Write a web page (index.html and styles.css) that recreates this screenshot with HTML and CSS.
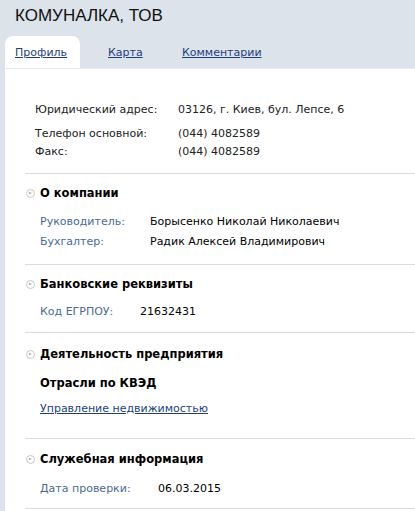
FILE: index.html
```html
<!DOCTYPE html>
<html lang="ru">
<head>
<meta charset="utf-8">
<link rel="stylesheet" href="styles.css">
</head>
<body>
<div class="page">
  <h1 class="title">КОМУНАЛКА, ТОВ</h1>
  <nav class="tabs">
    <div class="tab active"><a href="#">Профиль</a></div>
    <div class="tab"><a href="#">Карта</a></div>
    <div class="tab"><a href="#">Комментарии</a></div>
  </nav>
  <main class="panel">
    <div class="contacts">
      <div class="crow first"><span class="clabel">Юридический адрес:</span><span>03126, г. Киев, бул. Лепсе, 6</span></div>
      <div class="crow"><span class="clabel">Телефон основной:</span><span>(044) 4082589</span></div>
      <div class="crow"><span class="clabel">Факс:</span><span>(044) 4082589</span></div>
    </div>

    <section class="sec s-company">
      <h2 class="shead"><span class="icon"></span>О компании</h2>
      <div class="rows w110">
        <span class="lbl">Руководитель:</span><span class="val">Борысенко Николай Николаевич</span>
        <span class="lbl">Бухгалтер:</span><span class="val">Радик Алексей Владимирович</span>
      </div>
    </section>

    <section class="sec s-bank">
      <h2 class="shead"><span class="icon"></span>Банковские реквизиты</h2>
      <div class="rows w100">
        <span class="lbl">Код ЕГРПОУ:</span><span class="val">21632431</span>
      </div>
    </section>

    <section class="sec s-act">
      <h2 class="shead"><span class="icon"></span>Деятельность предприятия</h2>
      <h3 class="subhead">Отрасли по КВЭД</h3>
      <a class="link" href="#">Управление недвижимостью</a>
    </section>

    <section class="sec s-service">
      <h2 class="shead"><span class="icon"></span>Служебная информация</h2>
      <div class="rows w118">
        <span class="lbl">Дата проверки:</span><span class="val">06.03.2015</span>
      </div>
    </section>
  </main>
</div>
</body>
</html>
```

FILE: styles.css
```css
html, body {
  margin: 0;
  padding: 0;
  background: #dce3ea;
  font-family: "DejaVu Sans", Verdana, sans-serif;
  font-size: 11px;
  color: #000;
}

.page {
  width: 415px;
  height: 511px;
  overflow: hidden;
}

.title {
  margin: 0;
  padding: 6px 0 0 15px;
  height: 30px;
  font-family: "Liberation Sans", Arial, sans-serif;
  font-weight: normal;
  font-size: 17px;
  line-height: 20px;
  color: #111;
}

.tabs {
  display: flex;
  margin-left: 5px;
  height: 32px;
  border-bottom: 1px solid #e6ebf0;
}

.tab {
  padding: 10px 0 0 10px;
  box-sizing: border-box;
}

.tab:nth-child(1) { width: 75px; }
.tab:nth-child(2) { width: 75px; padding-left: 28px; }
.tab:nth-child(3) { padding-left: 27px; }

.tab.active {
  background: #fff;
  border-radius: 8px 8px 0 0;
}

.tab a {
  color: #1f3f7a;
  text-decoration: underline;
  line-height: 14px;
}

.panel {
  margin-left: 5px;
  background: #fff;
  height: 450px;
}

.contacts {
  padding: 32px 0 12px 30px;
}

.crow {
  display: flex;
  line-height: 18px;
  color: #222;
}

.crow.first {
  margin-bottom: 6px;
}

.clabel {
  width: 143px;
}

.sec {
  margin-left: 20px;
  border-top: 1px solid #dcdcdc;
}

.s-service {
  border-bottom: 1px solid #dcdcdc;
}

.shead {
  display: flex;
  align-items: center;
  margin: 0;
  font-size: 11.5px;
  font-weight: bold;
  line-height: 14px;
  padding-top: 12px;
}

.icon {
  width: 7px;
  height: 7px;
  border: 1px solid #c8c8c8;
  border-radius: 50%;
  margin: 0 5px 0 1px;
  position: relative;
  box-sizing: content-box;
}

.icon::after {
  content: "";
  position: absolute;
  left: 2px;
  top: 2px;
  width: 0;
  height: 0;
  border-left: 3px solid #9a9a9a;
  border-top: 1.5px solid transparent;
  border-bottom: 1.5px solid transparent;
}

.rows {
  display: grid;
  padding: 15px 0 15px 15px;
  row-gap: 6px;
  line-height: 14px;
}

.w110 { grid-template-columns: 110px 1fr; }
.w100 { grid-template-columns: 100px 1fr; }
.w118 { grid-template-columns: 118px 1fr; }

.lbl {
  color: #4a6a94;
}

.s-bank .rows { padding-top: 14px; padding-bottom: 13px; }

.s-act .shead { padding-top: 14px; }
.s-service .shead { padding-top: 13px; }
.s-service .rows { padding-top: 16px; padding-bottom: 12px; }

.subhead {
  margin: 0;
  padding: 15px 0 0 15px;
  font-size: 11.5px;
  font-weight: bold;
  line-height: 14px;
}

.link {
  display: block;
  margin: 12px 0 0 15px;
  padding-bottom: 22px;
  color: #1f3f7a;
  line-height: 14px;
  width: max-content;
}
```
